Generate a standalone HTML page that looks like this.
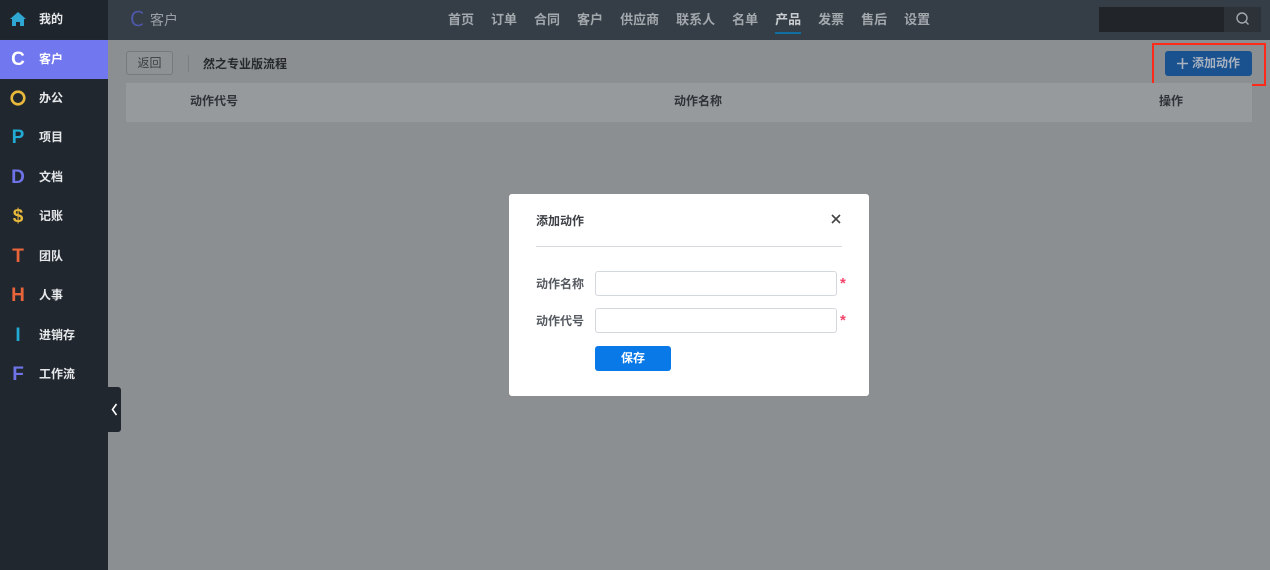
<!DOCTYPE html>
<html><head><meta charset="utf-8"><style>
*{margin:0;padding:0;box-sizing:border-box}
body{width:1270px;height:570px;overflow:hidden;background:#8c8f92;font-family:"Liberation Sans","Noto Sans CJK SC",sans-serif;position:relative;font-size:12px}
.side{position:absolute;left:0;top:0;width:108px;height:570px;background:#21272f}
.item{position:absolute;left:0;width:108px;height:39px;color:#e6e8ea;font-weight:bold;font-size:12px;line-height:39px}
.item .ic{position:absolute;left:9px;width:18px;text-align:center;font-size:19px;font-weight:bold;font-family:"Liberation Sans",sans-serif}
.item .t{position:absolute;left:39px}
.top{position:absolute;left:108px;top:0;width:1162px;height:40px;background:#353e46}
.nav{position:absolute;top:1px;left:448px;height:40px;line-height:38px;color:#a3a8ad;font-size:13px;font-weight:bold;white-space:nowrap}
.nav span{margin-right:17px;position:relative}
.nav .act{color:#c9ccd0}
.nav .act:after{content:"";position:absolute;left:0;right:0;bottom:-7px;height:2px;background:#106ea0}
</style></head><body>
<div class="side">
<div class="item" style="top:0;background:#1f252c"><span class="ic"><svg width="18" height="16" viewBox="0 0 18 16" style="margin-top:11px"><path d="M1 8L9 1l8 7h-2v7h-4v-4H7v4H3V8z" fill="#2fa7d3"/></svg></span><span class="t">我的</span></div>
<div class="item" style="top:40px;background:#7177ef;color:#fff"><span class="ic" style="color:#fff">C</span><span class="t">客户</span></div>
<div class="item" style="top:79px"><span class="ic"><svg width="18" height="18" style="margin-top:10px"><circle cx="9" cy="9" r="6.3" stroke="#e8b93a" stroke-width="2.6" fill="none"/></svg></span><span class="t">办公</span></div>
<div class="item" style="top:118px"><span class="ic" style="color:#21aad3">P</span><span class="t">项目</span></div>
<div class="item" style="top:158px"><span class="ic" style="color:#6e74e8">D</span><span class="t">文档</span></div>
<div class="item" style="top:197px"><span class="ic" style="color:#e8b93a">$</span><span class="t">记账</span></div>
<div class="item" style="top:237px"><span class="ic" style="color:#e8643a">T</span><span class="t">团队</span></div>
<div class="item" style="top:276px"><span class="ic" style="color:#e8643a">H</span><span class="t">人事</span></div>
<div class="item" style="top:316px"><span class="ic" style="color:#21aad3">I</span><span class="t">进销存</span></div>
<div class="item" style="top:355px"><span class="ic" style="color:#6e74e8">F</span><span class="t">工作流</span></div>
</div>
<div style="position:absolute;left:108px;top:387px;width:13px;height:45px;background:#21272f;border-radius:0 3px 3px 0"><svg width="13" height="45"><path d="M8.5 17l-4 5.5 4 5.5" stroke="#fff" stroke-width="1.6" fill="none"/></svg></div>
<div class="top">
<div style="position:absolute;left:22px;top:0;line-height:38px;color:#9aa0a6;font-size:14px"><span style="color:#4d58a8;font-size:20px;font-family:'DejaVu Sans';margin-right:6px;vertical-align:-1px">C</span>客户</div>
</div>
<div class="nav"><span>首页</span><span>订单</span><span>合同</span><span>客户</span><span>供应商</span><span>联系人</span><span>名单</span><span class="act">产品</span><span>发票</span><span>售后</span><span>设置</span></div>
<div style="position:absolute;left:1099px;top:7px;width:125px;height:25px;background:#212529"></div>
<div style="position:absolute;left:1224px;top:7px;width:37px;height:25px;background:#2c3238"><svg width="37" height="25"><circle cx="18" cy="11" r="5" stroke="#a3a8ad" stroke-width="1.4" fill="none"/><path d="M21.5 14.5l3 3" stroke="#a3a8ad" stroke-width="1.4"/></svg></div>
<div style="position:absolute;left:126px;top:51px;width:47px;height:24px;border:1px solid #777a7d;border-radius:3px;background:#8f9295;color:#3c3f42;text-align:center;line-height:22px;font-size:12px">返回</div>
<div style="position:absolute;left:188px;top:55px;width:1px;height:17px;background:#7d8083"></div>
<div style="position:absolute;left:203px;top:55px;color:#26292c;font-weight:bold;font-size:12px">然之专业版流程</div>
<div style="position:absolute;left:1152px;top:43px;width:114px;height:43px;border:2px solid #ff2a1a"></div>
<div style="position:absolute;left:1165px;top:51px;width:87px;height:25px;background:#1a5290;border-radius:3px;color:#a9b3c0;font-weight:bold;line-height:25px;font-size:12px"><svg style="position:absolute;left:12px;top:7px" width="11" height="11"><path d="M5.5 0v11M0 5.5h11" stroke="#a9b3c0" stroke-width="1.6"/></svg><span style="position:absolute;left:27px">添加动作</span></div>
<div style="position:absolute;left:126px;top:83px;width:1126px;height:39px;background:#979a9d;color:#2f3236;font-weight:bold;font-size:12px;line-height:37px">
<span style="position:absolute;left:64px">动作代号</span><span style="position:absolute;left:548px">动作名称</span><span style="position:absolute;left:1033px">操作</span></div>
<div style="position:absolute;left:509px;top:194px;width:360px;height:202px;background:#fff;border-radius:3px;color:#3c4045">
<div style="position:absolute;left:27px;top:18px;font-weight:bold;font-size:12px">添加动作</div>
<svg style="position:absolute;left:321px;top:19px" width="12" height="12"><path d="M2 2l8 8M10 2l-8 8" stroke="#444" stroke-width="1.6"/></svg>
<div style="position:absolute;left:27px;top:52px;width:306px;height:1px;background:#d7dae0"></div>
<div style="position:absolute;left:27px;top:81px;font-weight:bold;color:#555a60">动作名称</div>
<div style="position:absolute;left:86px;top:77px;width:242px;height:25px;border:1px solid #d3d7de;border-radius:3px"></div>
<div style="position:absolute;left:331px;top:81px;color:#f0446a;font-weight:bold;font-size:15px">*</div>
<div style="position:absolute;left:27px;top:118px;font-weight:bold;color:#555a60">动作代号</div>
<div style="position:absolute;left:86px;top:114px;width:242px;height:25px;border:1px solid #d3d7de;border-radius:3px"></div>
<div style="position:absolute;left:331px;top:118px;color:#f0446a;font-weight:bold;font-size:15px">*</div>
<div style="position:absolute;left:86px;top:152px;width:76px;height:25px;background:#0a79e8;border-radius:3px;color:#fff;font-weight:bold;text-align:center;line-height:25px">保存</div>
</div>
</body></html>
